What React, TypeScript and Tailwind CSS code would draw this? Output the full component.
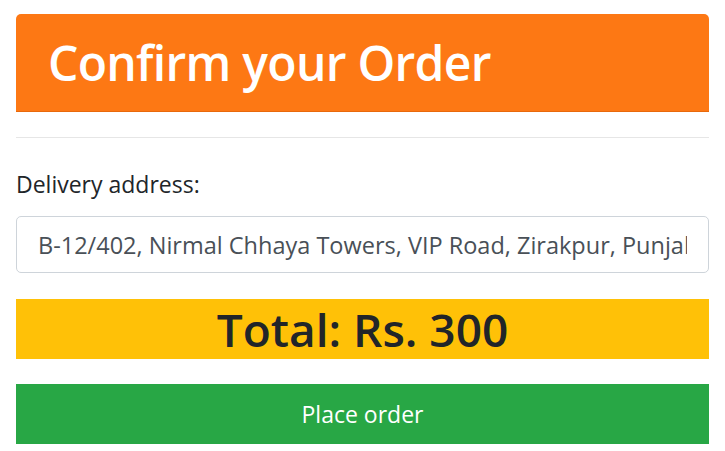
import React from "react";

const address = "B-12/402, Nirmal Chhaya Towers, VIP Road, Zirakpur, Punjab";

const ConfirmOrder: React.FC = () => {
  return (
    <div className="min-h-[451px] bg-white px-4 pt-[14px] font-['Open_Sans','Noto_Sans',sans-serif]">
      <div className="flex h-[98px] items-center rounded-t-[5px] border-b border-[#e8690c] bg-[#fd7814] pl-8">
        <h1 className="text-[48px] font-semibold leading-none tracking-[-0.7px] text-white">Confirm your Order</h1>
      </div>
      <hr className="mt-[25px] border-t border-[#e6e6e6]" />

      <label className="mt-[35px] block text-[23px] leading-none text-[#212529]">Delivery address:</label>
      <input
        className="mt-[20px] block h-[57px] w-full rounded-[5px] border border-[#ced4da] px-[21px] text-[23.5px] text-[#495057] outline-none"
        defaultValue={address}
        readOnly
      />

      <div className="mt-[26px] flex h-[60px] items-center justify-center bg-[#ffc107]">
        <span className="text-[46px] font-semibold leading-none text-[#212529]">Total: Rs. 300</span>
      </div>

      <button className="mt-[25px] flex h-[60px] w-full items-center justify-center bg-[#28a745] text-[23px] text-white">
        Place order
      </button>
    </div>
  );
};

export default function App() {
  return <ConfirmOrder />;
}
